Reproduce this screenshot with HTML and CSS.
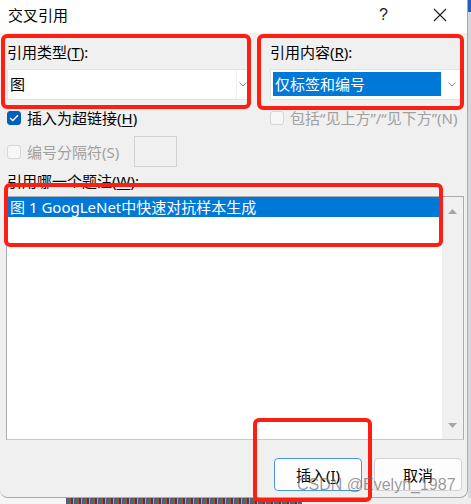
FILE: index.html
```html
<!DOCTYPE html>
<html lang="zh-CN">
<head>
    <meta charset="UTF-8">
    <title>交叉引用</title>
    <link rel="stylesheet" href="styles.css">
</head>
<body>
    <div class="screen">
        <div class="dialog">
            <div class="titlebar">
                <span class="title">交叉引用</span>
                <div class="title-actions">
                    <span class="help">?</span>
                    <svg class="close" width="14" height="14" viewBox="0 0 14 14">
                        <path d="M1 1 L13 13 M13 1 L1 13" stroke="#1a1a1a" stroke-width="1.1" fill="none"/>
                    </svg>
                </div>
            </div>

            <div class="content">
                <div class="fields">
                    <div class="field">
                        <label>引用类型(<u>T</u>):</label>
                        <div class="combo">
                            <span class="combo-value">图</span>
                            <span class="combo-btn combo-btn-narrow">
                                <svg width="8" height="5" viewBox="0 0 8 5"><path d="M0.5 0.5 L4 4 L7.5 0.5" fill="none" stroke="#8a8a8a"/></svg>
                            </span>
                        </div>
                    </div>
                    <div class="field">
                        <label>引用内容(<u>R</u>):</label>
                        <div class="combo">
                            <span class="combo-value"><span class="selected-text">仅标签和编号</span></span>
                            <span class="combo-btn">
                                <svg width="8" height="5" viewBox="0 0 8 5"><path d="M0.5 0.5 L4 4 L7.5 0.5" fill="none" stroke="#8a8a8a"/></svg>
                            </span>
                        </div>
                    </div>
                </div>

                <div class="fields options">
                    <label class="check">
                        <span class="box checked">
                            <svg width="10" height="8" viewBox="0 0 10 8"><path d="M1 4 L3.8 6.6 L9 1.2" fill="none" stroke="#fff" stroke-width="1.4"/></svg>
                        </span>
                        <span>插入为超链接(<u>H</u>)</span>
                    </label>
                    <label class="check disabled">
                        <span class="box"></span>
                        <span>包括“见上方”/“见下方”(N)</span>
                    </label>
                </div>

                <div class="sep-row">
                    <label class="check disabled">
                        <span class="box"></span>
                        <span>编号分隔符(S)</span>
                    </label>
                    <span class="sep-input"></span>
                </div>

                <div class="list-label">引用哪一个题注(<u>W</u>):</div>

                <div class="listbox">
                    <div class="items">
                        <div class="item selected">图 1 GoogLeNet中快速对抗样本生成</div>
                    </div>
                    <div class="scrollbar">
                        <svg width="9" height="5" viewBox="0 0 9 5"><path d="M0 5 L4.5 0 L9 5 Z" fill="#a6a6a6"/></svg>
                        <svg width="9" height="5" viewBox="0 0 9 5"><path d="M0 0 L4.5 5 L9 0 Z" fill="#a6a6a6"/></svg>
                    </div>
                </div>

                <div class="buttons">
                    <button class="btn btn-primary">插入(<u>I</u>)</button>
                    <button class="btn">取消</button>
                </div>
            </div>

            <!-- annotation boxes drawn over the dialog -->
            <div class="mark mark-type"></div>
            <div class="mark mark-content"></div>
            <div class="mark mark-caption"></div>
            <div class="mark mark-insert"></div>

            <div class="watermark">CSDN @Evelyn_1987</div>
        </div>
        <div class="edge"></div>
    </div>
    <div class="bottom-strip">
        <span class="strip-light"></span>
        <span class="strip-noise"></span>
        <span class="strip-rest"></span>
    </div>
</body>
</html>
```

FILE: styles.css
```css
* {
    box-sizing: border-box;
}

body {
    margin: 0;
    width: 471px;
    height: 504px;
    overflow: hidden;
    background: #f3f3f3;
    font-family: "Noto Sans", "Noto Sans CJK SC", sans-serif;
    font-size: 15px;
    color: #000;
}

u {
    text-decoration-thickness: 1px;
    text-underline-offset: 2px;
}

.screen {
    display: flex;
    height: 498px;
}

.dialog {
    position: relative;
    width: 468px;
    height: 498px;
    background: #f0f0f0;
    border-right: 1px solid #a9a9a9;
    border-bottom: 1px solid #a9a9a9;
    border-radius: 0 0 8px 8px;
    display: flex;
    flex-direction: column;
}

.edge {
    width: 3px;
    background: linear-gradient(#1f5fbf 0 12px, #d4d7db 12px);
}

/* title bar */
.titlebar {
    height: 33px;
    background: #fff;
    display: flex;
    align-items: center;
    padding-left: 8px;
}

.title {
    flex: 1;
    line-height: 20px;
    margin-top: -3px;
}

.title-actions {
    display: flex;
    align-items: center;
    gap: 45px;
    padding-right: 20px;
    margin-top: -4px;
}

.help {
    font-family: "Liberation Sans", sans-serif;
    font-size: 16px;
    color: #1a1a1a;
}

/* body */
.content {
    flex: 1;
    display: flex;
    flex-direction: column;
    padding: 9px 5px 0 7px;
}

.fields {
    display: grid;
    grid-template-columns: 241px 192px;
    column-gap: 22px;
}

.field label {
    display: block;
    line-height: 20px;
    margin-bottom: 7px;
}

.combo {
    height: 31px;
    background: #fff;
    border: 1px solid #e3e3e3;
    display: flex;
}

.combo-value {
    flex: 1;
    display: flex;
    padding: 2px 0 3px 1px;
    line-height: 24px;
}

.combo-value:first-child {
    padding-left: 2px;
}

.selected-text {
    flex: 1;
    background: #0078d7;
    color: #fff;
    padding-left: 2px;
}

.combo-btn {
    width: 20px;
    border-left: 1px solid #efefef;
    display: flex;
    align-items: center;
    justify-content: center;
}

.combo-btn-narrow {
    width: 11px;
    justify-content: flex-start;
    padding-left: 2px;
}

/* checkboxes */
.options {
    margin-top: 8px;
}

.check {
    display: flex;
    align-items: center;
    gap: 6px;
    line-height: 20px;
    white-space: nowrap;
}

.box {
    width: 14px;
    height: 14px;
    border: 1px solid #c8c8c8;
    border-radius: 3px;
    background: #f7f7f7;
    display: flex;
    align-items: center;
    justify-content: center;
}

.box.checked {
    background: #005fb8;
    border-color: #005fb8;
}

.disabled {
    color: #a0a0a0;
}

.disabled .box {
    border-color: #d6d6d6;
}

.sep-row {
    display: flex;
    align-items: center;
    gap: 15px;
    margin-top: 8px;
}

.sep-input {
    width: 43px;
    height: 31px;
    border: 1px solid #d3d3d3;
    background: #f0f0f0;
}

.list-label {
    line-height: 20px;
    margin-top: 4px;
}

/* caption list */
.listbox {
    margin: 5px 0 0 -1px;
    width: 458px;
    height: 244px;
    border: 1px solid #a9acb0;
    border-bottom-color: #c9c9c9;
    display: flex;
}

.items {
    flex: 1;
    background: #fff;
}

.item {
    height: 20px;
    line-height: 20px;
    padding-left: 3px;
}

.item.selected {
    background: #0078d7;
    color: #fff;
}

.scrollbar {
    width: 21px;
    background: #f0f0f0;
    display: flex;
    flex-direction: column;
    align-items: center;
    justify-content: space-between;
    padding: 12px 0 11px;
}

/* buttons */
.buttons {
    display: flex;
    justify-content: flex-end;
    gap: 12px;
    margin-top: 18px;
}

.btn {
    width: 88px;
    height: 33px;
    border: 1px solid #d2d2d2;
    border-radius: 4px;
    background: #fdfdfd;
    font-family: "Noto Sans", "Noto Sans CJK SC", sans-serif;
    font-size: 15px;
    color: #000;
    padding: 0;
}

.btn-primary {
    border-color: #4a95e0;
}

/* red annotations */
.mark {
    position: absolute;
    border: 4px solid #ff1e12;
    border-radius: 6px;
}

.mark-type {
    left: 1px;
    top: 34px;
    width: 250px;
    height: 75px;
}

.mark-content {
    left: 257px;
    top: 34px;
    width: 207px;
    height: 76px;
}

.mark-caption {
    left: 4px;
    top: 183px;
    width: 439px;
    height: 64px;
}

.mark-insert {
    left: 253px;
    top: 418px;
    width: 119px;
    height: 84px;
}

.watermark {
    position: absolute;
    left: 297px;
    top: 476px;
    font-family: "Liberation Sans", sans-serif;
    font-size: 16px;
    color: rgba(110, 110, 110, 0.7);
    white-space: nowrap;
}

/* desktop showing under the dialog */
.bottom-strip {
    display: flex;
    height: 6px;
}

.strip-light {
    width: 66px;
    background: #f5f5f5;
}

.strip-noise {
    width: 236px;
    background: repeating-linear-gradient(90deg, #6a4f8c 0 2px, #2f7d55 2px 4px, #b8433a 4px 5px, #39405f 5px 7px, #c9a640 7px 8px);
}

.strip-rest {
    flex: 1;
    background: #eeeeee;
}
```
